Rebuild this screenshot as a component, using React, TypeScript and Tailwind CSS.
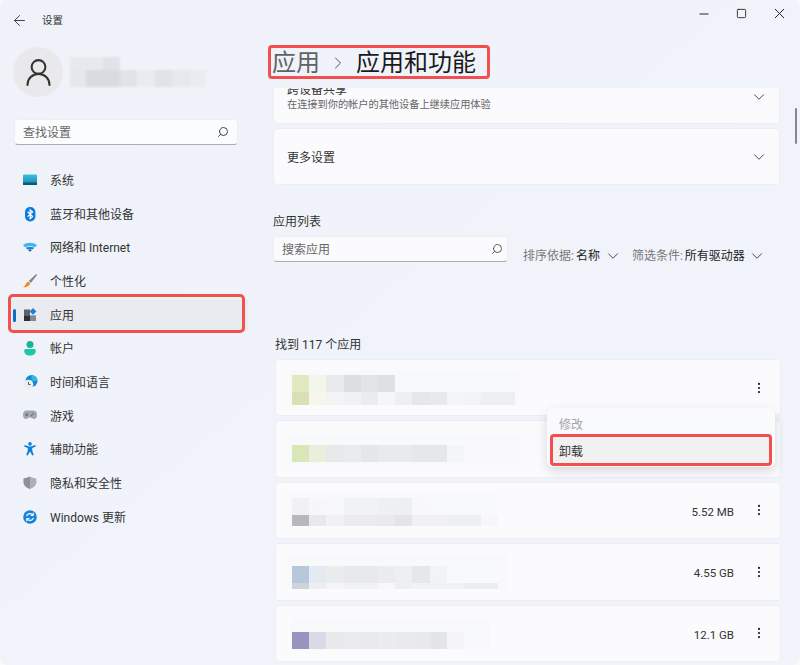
import React from "react";
import { ArrowLeft, ChevronDown, ChevronRight, EllipsisVertical, Minus, Search, Square, UserRound, X } from "lucide-react";

const navItems = [
  { label: "系统", icon: <SystemIcon /> },
  { label: "蓝牙和其他设备", icon: <BluetoothIcon /> },
  { label: "网络和 Internet", icon: <WifiIcon /> },
  { label: "个性化", icon: <BrushIcon /> },
  { label: "应用", icon: <AppsIcon />, active: true },
  { label: "帐户", icon: <AccountIcon /> },
  { label: "时间和语言", icon: <TimeIcon /> },
  { label: "游戏", icon: <GameIcon /> },
  { label: "辅助功能", icon: <AccessIcon /> },
  { label: "隐私和安全性", icon: <ShieldIcon /> },
  { label: "Windows 更新", icon: <UpdateIcon /> },
];

const apps = [
  {
    size: "",
    patch: "w-[230px] h-[35px] ml-[13px] pt-[5px] pl-[3px]",
    rows: [
      { h: "h-[17px]", cells: ["bg-[#e2e8c0]", "bg-[#f3f6ea]", "bg-[#e9eaec]", "bg-[#dcdde0]", "bg-[#e3e4e7]", "bg-[#dfe0e3]", "bg-[#f8f9fb]"] },
      { h: "h-[13px]", cells: ["bg-[#d8e0b4]", "bg-[#f8f6ec]", "bg-[#f2f3f4]", "bg-[#f0f1f2]", "bg-[#ebecee]", "bg-[#f5f6f7]", "bg-[#eeeff1]", "bg-[#e6e7e9]", "bg-[#e8e9eb]", "bg-[#f4f5f6]", "bg-[#f2f3f4]", "bg-[#eeeff1]", "bg-[#eeeff1]"] },
    ],
  },
  {
    size: "",
    patch: "w-[231px] h-[30px] ml-[12px] pt-[11px] pl-[4px]",
    rows: [
      { h: "h-[17px]", cells: ["bg-[#d8e6b8]", "bg-[#e8f0dc]", "bg-[#e7e8ea]", "bg-[#eaebed]", "bg-[#e5e6e8]", "bg-[#e9eaec]", "bg-[#e9eaec]", "bg-[#e6e7e9]", "bg-[#e6e7e9]", "bg-[#f4f5f6]", "bg-[#f9f9fb]", "bg-[#f9f9fb]", "bg-[#f9f9fb]"] },
    ],
  },
  {
    size: "5.52 MB",
    patch: "w-[207px] h-[32px] ml-[13px] pt-[4px] pl-[3px]",
    rows: [
      { h: "h-[17px]", cells: ["bg-[#f1f1f3]", "bg-[#f7f7f9]", "bg-[#f7f8f9]", "bg-[#f1f2f3]", "bg-[#f1f2f3]", "bg-[#eff0f2]", "bg-[#eeeff1]", "bg-[#f8f8fa]"] },
      { h: "h-[11px]", cells: ["bg-[#b8b8ba]", "bg-[#e9e9eb]", "bg-[#f2f2f4]", "bg-[#ebebed]", "bg-[#ebebed]", "bg-[#eaeaec]", "bg-[#e4e5e7]", "bg-[#f1f1f3]", "bg-[#f1f1f3]", "bg-[#eeeff1]", "bg-[#eeeff1]", "bg-[#f7f7f9]"] },
    ],
  },
  {
    size: "4.55 GB",
    patch: "w-[219px] h-[35px] ml-[12px] pt-[12px] pl-[4px]",
    rows: [
      { h: "h-[17px]", cells: ["bg-[#b8c8dc]", "bg-[#e4eaf2]", "bg-[#ebecee]", "bg-[#e8e9eb]", "bg-[#e8e9eb]", "bg-[#ebecee]", "bg-[#eeeff0]", "bg-[#e6e7e9]", "bg-[#f2f3f4]"] },
      { h: "h-[6px]", cells: ["bg-[#cfd2da]", "bg-[#eceef0]", "bg-[#f5f5f7]", "bg-[#f1f2f3]", "bg-[#f1f2f3]", "bg-[#f8f8fa]", "bg-[#eeeff1]", "bg-[#f1f2f3]", "bg-[#f1f2f3]", "bg-[#f1f2f3]", "bg-[#ecedef]", "bg-[#ecedef]"] },
    ],
  },
  {
    size: "12.1 GB",
    patch: "w-[200px] h-[31px] ml-[14px] pt-[14px] pl-[2px]",
    rows: [
      { h: "h-[17px]", cells: ["bg-[#9794c0]", "bg-[#dadae6]", "bg-[#e8e9eb]", "bg-[#eaebed]", "bg-[#e9eaec]", "bg-[#ebecee]", "bg-[#e9eaec]", "bg-[#e8e9eb]", "bg-[#e4e5e7]", "bg-[#f5f5f7]"] },
    ],
  },
];

function SystemIcon() {
  return (
    <svg width="16" height="16" viewBox="0 0 16 16">
      <defs>
        <linearGradient id="sys" x1="0" y1="0" x2="0" y2="1">
          <stop offset="0" stopColor="#3fc0dc" />
          <stop offset="1" stopColor="#0f86b4" />
        </linearGradient>
      </defs>
      <rect x="1" y="1.500" width="14" height="10.500" rx="1" fill="url(#sys)" />
      <rect x="1" y="9.600" width="14" height="2.400" rx="0.500" fill="#0c5878" />
    </svg>
  );
}

function BluetoothIcon() {
  return (
    <svg width="16" height="16" viewBox="0 0 16 16">
      <rect x="3" y="0" width="10.400" height="14.400" rx="5" fill="#0b7ae0" />
      <path d="M5.600 4.800 10.600 9.400 8.200 11.600V2.800L10.600 5 5.600 9.600" fill="none" stroke="#fff" strokeWidth="1.200" />
    </svg>
  );
}

function WifiIcon() {
  return (
    <svg width="16" height="16" viewBox="0 1 16 16">
      <path d="M1 6.200C5 3 11 3 15 6.200L12.700 8.400C9.800 6.400 6.200 6.400 3.300 8.400Z" fill="#38b6f2" />
      <path d="M3.800 8.900C6.400 7.200 9.600 7.200 12.200 8.900L10.400 10.600C8.900 9.800 7.100 9.800 5.600 10.600Z" fill="#1585d8" />
      <path d="M6.100 11 C7.300 10.400 8.700 10.400 9.900 11L8 12.800Z" fill="#0b4f9e" />
    </svg>
  );
}

function BrushIcon() {
  return (
    <svg width="16" height="16" viewBox="0 1 16 16">
      <path d="M14.200 1 15.200 1.800 9 9.800 6.800 8Z" fill="#7f8287" />
      <path d="M6.200 8.600 8.400 10.300C7.600 13 4.400 14.600 1.200 14.400 3.400 13.200 3.600 9.800 6.200 8.600Z" fill="#f08a24" />
    </svg>
  );
}

function AppsIcon() {
  return (
    <svg width="16" height="16" viewBox="0 0 16 16">
      <rect x="2" y="1.500" width="6" height="5.800" fill="#5f6269" />
      <rect x="2" y="7.300" width="6" height="5.700" fill="#2e3035" />
      <rect x="8" y="7.300" width="6" height="5.700" fill="#85888d" />
      <path d="M11 0 14.400 3.400 11 6.800 7.600 3.400Z" fill="#1583e0" />
    </svg>
  );
}

function AccountIcon() {
  return (
    <svg width="16" height="16" viewBox="0 1 16 16">
      <circle cx="8" cy="4.600" r="3.500" fill="#19b39a" />
      <path d="M2.200 11c0-1.400 1-2 2-2h7.600c1 0 2 .6 2 2 0 3-2.700 4.600-5.800 4.600S2.200 14 2.200 11Z" fill="#1cc8a6" />
    </svg>
  );
}

function TimeIcon() {
  return (
    <svg width="16" height="16" viewBox="0 1 16 16">
      <circle cx="9.500" cy="7" r="6" fill="#0f8ad8" />
      <path d="M9.500 1a6 6 0 0 1 6 6H9.500Z" fill="#35b7d8" />
      <circle cx="6.500" cy="10.500" r="4.800" fill="#eceded" />
      <path d="M6.500 8V10.500H8.500" fill="none" stroke="#55585c" strokeWidth="1" />
    </svg>
  );
}

function GameIcon() {
  return (
    <svg width="16" height="16" viewBox="0 2 16 16">
      <path d="M4.500 3.600h7C13.800 3.600 15 5.600 15 8s-1.200 4-3 4c-1.400 0-1.800-1.500-4-1.500S5.400 12 4 12c-1.800 0-3-1.600-3-4s1.200-4.400 3.500-4.400Z" fill="#a3a6ab" />
      <circle cx="4.800" cy="7.800" r="1.200" fill="#6a6d73" />
      <circle cx="11" cy="6.800" r=".8" fill="#1b79d0" />
      <circle cx="9.600" cy="8.600" r=".8" fill="#1b79d0" />
    </svg>
  );
}

function AccessIcon() {
  return (
    <svg width="16" height="16" viewBox="0 0 16 16">
      <circle cx="8" cy="1.900" r="1.800" fill="#0f7fd8" />
      <path d="M2.700 3 8 4.800 13.300 3l.5 1.400-3.600 1.700v2.400l1.600 4.500-1.500.5L8 9.400 5.700 13.500l-1.500-.5 1.600-4.500V6.100L2.200 4.400Z" fill="#0f7fd8" />
    </svg>
  );
}

function ShieldIcon() {
  return (
    <svg width="16" height="16" viewBox="0 0 16 16">
      <path d="M8 .5C10 1.700 12 2.300 14.400 2.400V6.500C14.400 9.400 12 11.600 8 13 4 11.600 1.600 9.400 1.600 6.500V2.400C4 2.300 6 1.700 8 .5Z" fill="#adb0b5" />
      <path d="M8 .5V13C4 11.600 1.600 9.400 1.600 6.500V2.400C4 2.300 6 1.700 8 .5Z" fill="#8d9095" />
    </svg>
  );
}

function UpdateIcon() {
  return (
    <svg width="16" height="16" viewBox="0 1 16 16">
      <circle cx="8" cy="8" r="6.800" fill="#1484dc" />
      <path d="M4.600 7.200A3.500 3.500 0 0 1 10.800 6M11.400 8.800A3.500 3.500 0 0 1 5.200 10" fill="none" stroke="#fff" strokeWidth="1.200" />
      <path d="M11.200 3.800v2.600H8.600M4.800 12.200V9.600h2.600" fill="none" stroke="#fff" strokeWidth="1.200" />
    </svg>
  );
}

function Sidebar() {
  return (
    <aside className="w-[260px] shrink-0 flex flex-col">
      <div className="h-[41px] flex items-center pl-[11px] text-[10.500px] text-[#333]">
        <ArrowLeft size={17} strokeWidth={1.4} className="text-[#444]" />
        <span className="ml-[14px]">设置</span>
      </div>
      <div className="mt-[6px] ml-[13px] flex items-center">
        <div className="w-[50px] h-[50px] rounded-full bg-[#e9e9eb] flex items-center justify-center">
          <UserRound size={33} strokeWidth={1.5} className="text-[#333]" />
        </div>
        <div className="ml-[7px] blur-[1px]">
          <div className="flex h-[13px]">
            <div className="w-[33px] bg-[#e6e9ee]" />
            <div className="w-[17px] bg-[#e0e3e8]" />
          </div>
          <div className="flex h-[17px]">
            <div className="w-[16px] bg-[#e4e7ec]" />
            <div className="w-[34px] bg-[#d8dbe0]" />
            <div className="w-[17px] bg-[#e0e4e8]" />
            <div className="w-[18px] bg-[#e8ecf1]" />
            <div className="w-[17px] bg-[#e0e4e9]" />
            <div className="w-[18px] bg-[#e5e8ed]" />
            <div className="w-[16px] bg-[#e9ecf1]" />
          </div>
        </div>
      </div>
      <div className="mt-[22px] ml-[14px] w-[224px] h-[26px] rounded-[4px] bg-[#fbfcfe] border border-[#eceef2] border-b-[#a9abae] flex items-center justify-between pl-2 pr-2">
        <span className="pt-[2px] text-[12px] text-[#666]">查找设置</span>
        <Search size={12} strokeWidth={1.8} className="text-[#333] -scale-x-100" />
      </div>
      <nav className="mt-[19px] relative">
        {navItems.map((item) => (
          <div key={item.label} className={`h-[33.7px] flex items-center mx-3 rounded-[3px] relative ${item.active ? "bg-[#e9ebf0]" : ""}`}>
            {item.active && <div className="absolute left-[1px] top-[10px] h-[13px] w-[2.500px] rounded-full bg-[#0f6cc4]" />}
            <div className="ml-[10px] w-[16px] h-[16px] shrink-0">{item.icon}</div>
            <span className="ml-[12px] text-[12px] text-[#333]">{item.label}</span>
          </div>
        ))}
        <div className="absolute left-[8px] top-[130px] w-[237px] h-[39px] border-[3px] border-[#f24f4f] rounded-[5px]" />
      </nav>
    </aside>
  );
}

function AppRow({ app }: { app: (typeof apps)[number] }) {
  return (
    <div className="h-[57.400px] rounded-[4px] bg-[#fbfbfd] border border-[#eceef3] flex items-center pr-[14px]">
      <div className={`${app.patch} bg-[#f8f9fb] blur-[0.6px] flex flex-col`}>
        {app.rows.map((row, i) => (
          <div key={i} className={`flex ${row.h}`}>
            {row.cells.map((cell, j) => (
              <div key={j} className={`w-[17.200px] shrink-0 ${cell}`} />
            ))}
          </div>
        ))}
      </div>
      <span className="ml-auto pt-[4px] text-[11.500px] text-[#333]">{app.size}</span>
      <EllipsisVertical size={14} strokeWidth={1.8} className="ml-[18px] text-[#222]" />
    </div>
  );
}

function Main() {
  return (
    <main className="flex-1 min-w-0 relative flex flex-col">
      <div className="h-[41px] flex items-start pt-[6px] justify-end text-[#222]">
        <Minus size={14} strokeWidth={1.700} className="mr-[25px] mt-[1px]" />
        <Square size={11} strokeWidth={1.900} className="mr-[24px] mt-[2px]" />
        <X size={17} strokeWidth={1.400} className="mr-[12px] -mt-[1px]" />
      </div>
      <div className="h-[47px] pl-3 relative">
        <div className="flex items-center h-[42px] pt-[2px] text-[24px] leading-none">
          <span className="text-[#5f6266]">应用</span>
          <ChevronRight size={20} strokeWidth={1.200} className="mx-2 text-[#555]" />
          <span className="text-[#1a1a1a]">应用和功能</span>
        </div>
        <div className="absolute left-[8px] top-[4px] w-[222px] h-[34px] border-[3px] border-[#f24f4f] rounded-[4px]" />
      </div>
      <div className="flex-1 overflow-hidden pl-[13px] pr-[20px]">
        <div className="-mt-[21px] h-[57px] rounded-[4px] bg-[#fbfbfd] border border-[#eceef3] flex items-center justify-between pl-[13px] pr-[11px]">
          <div className="pt-[2px]">
            <div className="text-[12px] leading-[16px] text-[#333]">跨设备共享</div>
            <div className="text-[10.200px] leading-[14px] text-[#666]">在连接到你的帐户的其他设备上继续应用体验</div>
          </div>
          <ChevronDown size={18} strokeWidth={1.300} className="text-[#444] mt-[2px]" />
        </div>
        <div className="mt-1 h-[57px] rounded-[4px] bg-[#fbfbfd] border border-[#eceef3] flex items-center justify-between pl-[13px] pr-[11px]">
          <span className="pt-[2px] text-[12px] text-[#333]">更多设置</span>
          <ChevronDown size={18} strokeWidth={1.300} className="text-[#444]" />
        </div>
        <div className="mt-[29px] h-[15px] text-[12px] leading-[16px] text-[#333]">应用列表</div>
        <div className="mt-[7px] flex items-end">
          <div className="w-[235px] h-[26px] rounded-[4px] bg-[#fbfbfd] border border-[#eceef2] border-b-[#a9abae] flex items-center justify-between pl-2 pr-1">
            <span className="pt-[2px] text-[12px] text-[#666]">搜索应用</span>
            <Search size={12} strokeWidth={1.700} className="text-[#444] -scale-x-100" />
          </div>
          <div className="ml-[15px] flex items-center text-[12px] text-[#777] leading-[18px] -mb-[3px]">
            <span>排序依据:</span>
            <span className="ml-[2px] text-[#222]">名称</span>
            <ChevronDown size={18} strokeWidth={1.300} className="ml-1 text-[#444]" />
            <span className="ml-[10px]">筛选条件:</span>
            <span className="ml-[2px] text-[#222]">所有驱动器</span>
            <ChevronDown size={18} strokeWidth={1.300} className="ml-[3px] text-[#444]" />
          </div>
        </div>
        <div className="mt-[75px] ml-[2px] h-[15px] text-[12px] leading-[16px] text-[#333]">找到 117 个应用</div>
        <div className="mt-[7px] ml-[2px] -mr-[1px] flex flex-col gap-1 relative">
          {apps.map((app, i) => (
            <AppRow key={i} app={app} />
          ))}
          <div className="absolute left-[272px] top-[49px] w-[228px] h-[59px] rounded-[6px] bg-[#f9fafc] shadow-[0_4px_12px_rgba(0,0,0,0.14)] pt-[5px] px-[3px]">
            <div className="h-[21px] pl-[9px] pt-[2px] flex items-center text-[12px] text-[#a5a5a7]">修改</div>
            <div className="relative h-[32px] pl-[9px] pt-[4px] flex items-center rounded-[4px] bg-[#f1f1f2] text-[12px] text-[#333]">
              卸载
              <div className="absolute inset-0 border-[3px] border-[#f24f4f] rounded-[4px]" />
            </div>
          </div>
        </div>
      </div>
      <div className="absolute right-[3px] top-[108px] w-[2px] h-[36px] rounded-full bg-[#85878a]" />
    </main>
  );
}

export default function App() {
  return (
    <div className="w-[800px] h-[665px] bg-[#fafafa]">
      <div className="w-full h-full rounded-[7px] overflow-hidden flex bg-gradient-to-br from-[#eff3f9] to-[#f1f4fb] font-['Roboto','Noto_Sans_CJK_SC',sans-serif]">
        <Sidebar />
        <Main />
      </div>
    </div>
  );
}
